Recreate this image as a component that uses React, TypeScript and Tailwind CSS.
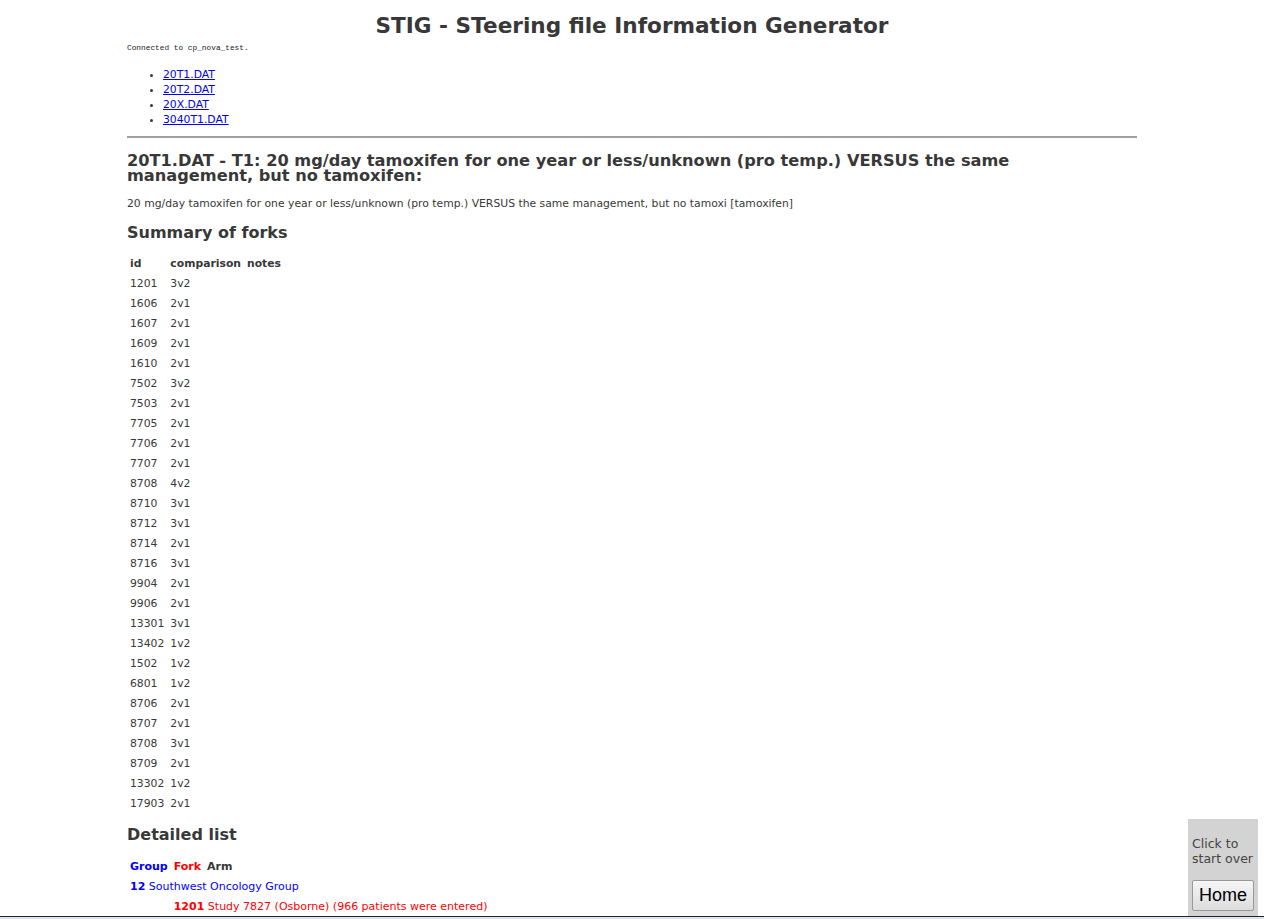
import React from 'react';

const forks: [string, string][] = [
  ['1201', '3v2'],
  ['1606', '2v1'],
  ['1607', '2v1'],
  ['1609', '2v1'],
  ['1610', '2v1'],
  ['7502', '3v2'],
  ['7503', '2v1'],
  ['7705', '2v1'],
  ['7706', '2v1'],
  ['7707', '2v1'],
  ['8708', '4v2'],
  ['8710', '3v1'],
  ['8712', '3v1'],
  ['8714', '2v1'],
  ['8716', '3v1'],
  ['9904', '2v1'],
  ['9906', '2v1'],
  ['13301', '3v1'],
  ['13402', '1v2'],
  ['1502', '1v2'],
  ['6801', '1v2'],
  ['8706', '2v1'],
  ['8707', '2v1'],
  ['8708', '3v1'],
  ['8709', '2v1'],
  ['13302', '1v2'],
  ['17903', '2v1'],
];

const files = ['20T1.DAT', '20T2.DAT', '20X.DAT', '3040T1.DAT'];

export default function App() {
  return (
    <div className="min-h-screen bg-white text-[#383838] font-['DejaVu_Sans',Verdana,sans-serif] text-[10.8px]">
      <div className="mx-auto w-[1010px] pb-10">
        <h1 className="pt-[12px] text-center text-[21.6px] leading-[28px] font-bold">
          STIG - STeering file Information Generator
        </h1>
        <p className="mt-[3px] font-['Liberation_Mono',monospace] text-[7.8px] leading-[10px] text-[#222]">
          Connected to cp_nova_test.
        </p>

        <ul className="mt-[14px] list-disc pl-[36px] leading-[15px]">
          {files.map((f) => (
            <li key={f}>
              <a href="#" className="text-[#0000ee] underline">
                {f}
              </a>
            </li>
          ))}
        </ul>

        <hr className="mt-[9px] border-t-2 border-[#a0a0a0]" />

        <h2 className="mt-[15px] text-[16.2px] leading-[15px] font-bold">
          20T1.DAT - T1: 20 mg/day tamoxifen for one year or less/unknown (pro temp.) VERSUS the same management, but no tamoxifen:
        </h2>
        <p className="mt-[13px] leading-[15px]">
          20 mg/day tamoxifen for one year or less/unknown (pro temp.) VERSUS the same management, but no tamoxi [tamoxifen]
        </p>

        <h3 className="mt-[11px] text-[16px] leading-[22px] font-bold">Summary of forks</h3>
        <table className="mt-[10px] border-separate border-spacing-0 text-[10.8px]">
          <thead>
            <tr className="h-[20px] font-bold text-left">
              <th className="px-[3px]">id</th>
              <th className="px-[3px]">comparison</th>
              <th className="px-[3px]">notes</th>
            </tr>
          </thead>
          <tbody>
            {forks.map(([id, c], i) => (
              <tr key={i} className="h-[20px]">
                <td className="px-[3px]">{id}</td>
                <td className="px-[3px]">{c}</td>
                <td className="px-[3px]"></td>
              </tr>
            ))}
          </tbody>
        </table>

        <h3 className="mt-[10px] text-[16px] leading-[22px] font-bold">Detailed list</h3>
        <table className="mt-[11px] border-separate border-spacing-0 text-[11px]">
          <tbody>
            <tr className="h-[20px] font-bold text-left">
              <td className="px-[3px] text-[#0000ff]">Group</td>
              <td className="px-[3px] text-[#ff0000]">Fork</td>
              <td className="px-[3px]">Arm</td>
            </tr>
            <tr className="h-[20px] text-[#0000ff]">
              <td colSpan={3} className="px-[3px]">
                <div className="w-0 whitespace-nowrap">
                  <b>12</b> Southwest Oncology Group
                </div>
              </td>
            </tr>
            <tr className="h-[20px] text-[#ff0000]">
              <td className="px-[3px]"></td>
              <td colSpan={2} className="px-[3px]">
                <div className="w-0 whitespace-nowrap">
                  <b>1201</b> Study 7827 (Osborne) (966 patients were entered)
                </div>
              </td>
            </tr>
          </tbody>
        </table>
      </div>

      <div className="fixed bottom-[3px] right-[6px] flex h-[97px] w-[70px] flex-col bg-[#d3d3d3] px-[4px] pt-[17px]">
        <p className="text-[12.5px] leading-[15px] text-[#444]">
          Click to
          <br />
          start over
        </p>
        <button className="mt-[14px] h-[31px] w-[62px] rounded-[2px] border border-[#999] bg-gradient-to-b from-[#f6f6f6] to-[#dcdcdc] font-['Liberation_Sans',Arial,sans-serif] text-[18px] text-black">
          Home
        </button>
      </div>

      <div className="fixed bottom-0 left-0 right-0 h-[3px] border-t border-[#222] bg-[#dfe6ee]" />
    </div>
  );
}
